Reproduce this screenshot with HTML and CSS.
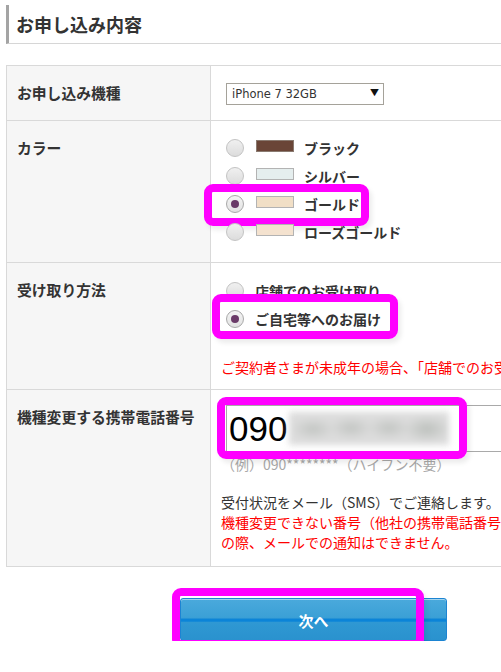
FILE: index.html
```html
<!DOCTYPE html>
<html lang="ja">
<head>
<meta charset="utf-8">
<title>お申し込み内容</title>
<link rel="stylesheet" href="styles.css">
</head>
<body>
<div class="page">
  <h2 class="heading">お申し込み内容</h2>

  <table class="form">
    <colgroup><col class="col-label"><col class="col-field"></colgroup>
    <tr>
      <th>お申し込み機種</th>
      <td class="cell-model">
        <span class="select-wrap">
          <select class="select"><option>iPhone 7 32GB</option></select>
          <span class="select-arrow">▼</span>
        </span>
      </td>
    </tr>
    <tr>
      <th>カラー</th>
      <td class="cell-color">
        <ul class="radio-list">
          <li class="radio-item"><input type="radio" name="color" class="radio"><span class="swatch swatch-black"></span><span class="opt">ブラック</span></li>
          <li class="radio-item"><input type="radio" name="color" class="radio"><span class="swatch swatch-silver"></span><span class="opt">シルバー</span></li>
          <li class="radio-item"><input type="radio" name="color" class="radio" checked><span class="swatch swatch-gold"></span><span class="opt">ゴールド</span><span class="mark mark-gold"></span></li>
          <li class="radio-item"><input type="radio" name="color" class="radio"><span class="swatch swatch-rose"></span><span class="opt">ローズゴールド</span></li>
        </ul>
      </td>
    </tr>
    <tr>
      <th>受け取り方法</th>
      <td class="cell-receive">
        <ul class="radio-list">
          <li class="radio-item"><input type="radio" name="recv" class="radio"><span class="opt opt-gap">店舗でのお受け取り</span></li>
          <li class="radio-item"><input type="radio" name="recv" class="radio" checked><span class="opt opt-gap">ご自宅等へのお届け</span><span class="mark mark-home"></span></li>
        </ul>
        <p class="note note-red note-minor">ご契約者さまが未成年の場合、「店舗でのお受け取り」をお選びください。</p>
      </td>
    </tr>
    <tr>
      <th>機種変更する携帯電話番号</th>
      <td class="cell-phone">
        <div class="phone-wrap">
          <input type="text" class="phone" value="090">
          <span class="blur"></span>
          <span class="mark mark-phone"></span>
        </div>
        <p class="hint">（例）090********（ハイフン不要）</p>
        <p class="note note-info">受付状況をメール（SMS）でご連絡します。</p>
        <p class="note note-red">機種変更できない番号（他社の携帯電話番号など）を入力された場合、お手続き<br>の際、メールでの通知はできません。</p>
      </td>
    </tr>
  </table>

  <div class="actions">
    <div class="btn-wrap">
      <button class="btn-next" type="button">次へ</button>
      <span class="mark mark-btn"></span>
    </div>
  </div>
</div>
</body>
</html>
```
FILE: styles.css
```css
html, body {
  margin: 0;
  padding: 0;
  overflow: hidden;
  background: #fff;
}
body {
  font-family: "Noto Sans CJK JP", "Noto Sans", sans-serif;
  color: #333;
  font-size: 14px;
}
.page {
  padding: 5px 0 0 6px;
  width: 900px;
}
.heading {
  margin: 0;
  height: 38px;
  line-height: 38px;
  border-left: 3px solid #a4a4a4;
  border-bottom: 1px solid #d6d6d6;
  padding-left: 7px;
  font-size: 18px;
  font-weight: bold;
  color: #333;
}
.form {
  margin-top: 21px;
  border-collapse: collapse;
  table-layout: fixed;
  width: 760px;
}
.col-label { width: 204px; }
.form th, .form td {
  border: 1px solid #d9d9d9;
  vertical-align: top;
}
.form th {
  background: #f6f6f6;
  text-align: left;
  font-weight: bold;
  font-size: 14.8px;
  line-height: 20px;
  padding: 17px 4px 0 10px;
  white-space: nowrap;
}
.form td {
  padding: 0 0 0 15px;
}
.cell-model { padding-top: 16px !important; padding-bottom: 15px !important; }
.cell-color { padding-top: 13px !important; padding-bottom: 16px !important; }
.cell-receive { padding-top: 14px !important; padding-bottom: 12px !important; }
.cell-phone { padding-top: 15px !important; padding-bottom: 14px !important; }

.select-wrap {
  position: relative;
  display: inline-block;
}
.select {
  appearance: none;
  -webkit-appearance: none;
  width: 158px;
  height: 22px;
  border: 1px solid #a5a29a;
  border-radius: 0;
  background: #fff;
  font-family: "DejaVu Sans", sans-serif;
  font-size: 11.5px;
  color: #333;
  padding: 0 0 0 5px;
  display: block;
}
.select-arrow {
  position: absolute;
  right: 5px;
  top: 5px;
  font-size: 9px;
  line-height: 10px;
  color: #111;
  pointer-events: none;
}

.radio-list {
  list-style: none;
  margin: 0;
  padding: 0;
  display: flex;
  flex-direction: column;
}
.radio-item {
  position: relative;
  height: 28px;
  display: flex;
  align-items: center;
}
.radio {
  appearance: none;
  -webkit-appearance: none;
  margin: 0;
  width: 18px;
  height: 18px;
  border-radius: 50%;
  border: 1px solid #c4c4c4;
  background: linear-gradient(#f0f0f0, #dcdcdc);
  display: grid;
  place-content: center;
  flex: none;
}
.radio:checked {
  background: linear-gradient(#f4f4f4, #e2e2e2);
  border-color: #a9a9a9;
}
.radio:checked::before {
  content: "";
  width: 8px;
  height: 8px;
  border-radius: 50%;
  background: #6a3a68;
}
.swatch {
  width: 36px;
  height: 10px;
  border: 1px solid #b3b3b3;
  margin-left: 12px;
  margin-top: -4px;
  flex: none;
}
.swatch-black { background: #6a4537; border-color: #8a7a70; }
.swatch-silver { background: #e5eeee; }
.swatch-gold { background: #f1dfc6; }
.swatch-rose { background: #f4e2cf; }
.opt {
  font-weight: bold;
  font-size: 14px;
  margin-left: 10px;
  white-space: nowrap;
  color: #333;
}
.opt-gap { margin-left: 11px; }

.note {
  margin: 0;
  font-size: 14px;
  line-height: 20px;
  white-space: nowrap;
  margin-left: -5px;
}
.note-red { color: #f00; }
.note-minor { margin-top: 24px; }
.note-info { margin-top: 18px; color: #333; }

.phone-wrap {
  position: relative;
  width: 600px;
}
.phone {
  box-sizing: border-box;
  display: block;
  width: 600px;
  height: 47px;
  border: 1px solid #a9a9a9;
  padding: 0 0 0 2px;
  margin: 0;
  font-family: "Liberation Sans", Arial, sans-serif;
  font-size: 35px;
  color: #000;
  background: #fff;
}
.blur {
  position: absolute;
  left: 63px;
  top: 7px;
  width: 160px;
  height: 33px;
  background:
    radial-gradient(ellipse 22px 11px at 24px 17px, #c2c5c2 0%, rgba(210,210,210,0) 100%),
    radial-gradient(ellipse 22px 11px at 62px 16px, #c2c5c2 0%, rgba(210,210,210,0) 100%),
    radial-gradient(ellipse 22px 11px at 100px 16px, #c2c5c2 0%, rgba(210,210,210,0) 100%),
    radial-gradient(ellipse 24px 13px at 138px 17px, #bcc0bc 0%, rgba(210,210,210,0) 100%),
    #dcdcdc;
  filter: blur(3px);
  pointer-events: none;
}
.hint {
  margin: 2px 0 0 -5px;
  font-size: 14px;
  line-height: 20px;
  color: #a8a8a8;
  white-space: nowrap;
}

.actions {
  padding: 31px 0 0 174px;
}
.btn-wrap {
  position: relative;
  display: inline-block;
}
.btn-next {
  display: block;
  width: 267px;
  height: 43px;
  border: 1px solid #1c84d2;
  border-radius: 3px;
  background: linear-gradient(to bottom,
    #4aa9dc 0%, #3ba0d6 45%, #2b95d4 47%, #0b84d8 50%, #0b84d8 54%, #2f98d3 57%, #2a92ce 100%);
  box-shadow: inset 0 1px 0 rgba(255,255,255,0.5);
  color: #fff;
  font-family: "Noto Sans CJK JP", sans-serif;
  font-weight: bold;
  font-size: 15px;
  padding: 2px 0 0 0;
  cursor: pointer;
}

.mark {
  position: absolute;
  box-sizing: border-box;
  border: 8px solid #ff00ff;
  border-radius: 9px;
  box-shadow: 3px 4px 5px rgba(0,0,0,0.08);
  pointer-events: none;
}
.mark-gold { left: -22px; top: -6px; width: 165px; height: 42px; }
.mark-home { left: -14px; top: -11px; width: 186px; height: 45px; }
.mark-phone { left: -9px; top: -8px; width: 250px; height: 62px; }
.mark-btn { left: -8px; top: -10px; width: 252px; height: 60px; }
```
